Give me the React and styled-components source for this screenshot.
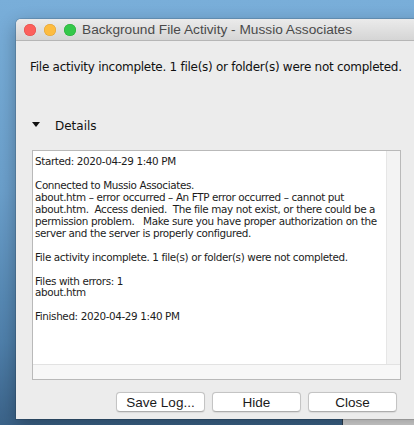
import React from "react"
import styled, { createGlobalStyle } from "styled-components"

const GlobalStyle = createGlobalStyle`
  html, body {
    margin: 0;
    padding: 0;
  }
  body {
    font-family: "DejaVu Sans", "Liberation Sans", sans-serif;
  }
`;

const Desktop = styled.div`
  position: relative;
  width: 414px;
  height: 425px;
  overflow: hidden;
  background: linear-gradient(180deg, #79aed9 0%, #6b9fcb 45%, #4f80ab 80%, #3b6389 100%);
  padding: 19px 0 0 16px;
  box-sizing: border-box;
`;

const BackWindow = styled.div`
  position: absolute;
  left: 342px;
  top: 412px;
  width: 90px;
  height: 30px;
  background: #dcdcdc;
  border-left: 1px solid #2c3e50;
`;

const Window = styled.div`
  position: relative;
  width: 420px;
  height: 400px;
  background: #ececec;
  border-radius: 5px 0 0 0;
  box-shadow: 0 0 0 1px rgba(0, 0, 0, 0.12), 0 6px 18px rgba(0, 0, 0, 0.3);
  display: flex;
  flex-direction: column;
  overflow: hidden;
`;

const TitleBar = styled.div`
  height: 21px;
  flex: none;
  display: flex;
  align-items: center;
  padding-left: 8px;
  gap: 6px;
  background: linear-gradient(180deg, #ebebeb 0%, #d5d5d5 100%);
  border-bottom: 1px solid #b6b6b6;
`;

const Light = styled.span`
  width: 12px;
  height: 12px;
  border-radius: 50%;
  background: ${p => p.$color};
  box-shadow: inset 0 0 0 0.5px ${p => p.$edge};
  flex: none;
`;

const Lights = styled.div`
  display: flex;
  gap: 8px;
`;

const Title = styled.div`
  font-family: "Liberation Sans", Arial, sans-serif;
  font-size: 13.7px;
  color: #4a4a4a;
  white-space: nowrap;
`;

const Body = styled.div`
  flex: 1;
  display: flex;
  flex-direction: column;
  padding: 0 0 0 14px;
`;

const Message = styled.div`
  font-size: 12px;
  letter-spacing: -0.27px;
  color: #111;
  margin-top: 19px;
  white-space: nowrap;
`;

const Disclosure = styled.div`
  display: flex;
  align-items: center;
  margin-top: 45px;
  padding-left: 2px;
  gap: 15px;
  font-size: 12px;
  color: #111;
`;

const Triangle = styled.span`
  width: 0;
  height: 0;
  border-left: 4px solid transparent;
  border-right: 4px solid transparent;
  border-top: 5px solid #111;
  margin-top: -3px;
`;

const LogBox = styled.div`
  margin: 17px 0 0 2px;
  width: 367px;
  height: 228px;
  border: 1px solid #b9b9b9;
  display: grid;
  grid-template-columns: 1fr 14px;
  grid-template-rows: 1fr 15px;
  background: #fafafa;
`;

const LogText = styled.pre`
  margin: 0;
  padding: 5px 0 0 2px;
  background: #fff;
  font-family: "DejaVu Sans", sans-serif;
  font-size: 10.4px;
  letter-spacing: -0.37px;
  line-height: 11.95px;
  color: #1c1c1c;
  white-space: pre;
  overflow: hidden;
`;

const VTrack = styled.div`
  background: #f3f3f3;
  border-left: 1px solid #e6e6e6;
`;

const HTrack = styled.div`
  grid-column: 1 / span 2;
  background: #f7f7f7;
  border-top: 1px solid #e2e2e2;
`;

const ButtonRow = styled.div`
  display: flex;
  gap: 7px;
  margin: 12px 0 0 86px;
`;

const Button = styled.button`
  width: 89px;
  height: 20px;
  padding: 0;
  border: 1px solid #c4c4c4;
  border-bottom-color: #adadad;
  border-radius: 4px;
  background: #fff;
  box-shadow: 0 0.5px 1px rgba(0, 0, 0, 0.08);
  font-family: "Liberation Sans", Arial, sans-serif;
  font-size: 13.5px;
  color: #1a1a1a;
`;

const Grip = styled.svg`
  position: absolute;
  right: 6px;
  bottom: 0;
`;

const log = `Started: 2020-04-29 1:40 PM

Connected to Mussio Associates.
about.htm – error occurred – An FTP error occurred – cannot put
about.htm.  Access denied.  The file may not exist, or there could be a
permission problem.   Make sure you have proper authorization on the
server and the server is properly configured.

File activity incomplete. 1 file(s) or folder(s) were not completed.

Files with errors: 1
about.htm

Finished: 2020-04-29 1:40 PM`;

export default function App() {
  return (
    <>
      <GlobalStyle />
      <Desktop>
        <BackWindow />
        <Window>
          <TitleBar>
            <Lights>
              <Light $color="#fc605c" $edge="#de4a45" />
              <Light $color="#fdbc40" $edge="#de9f34" />
              <Light $color="#34c84a" $edge="#27aa35" />
            </Lights>
            <Title>Background File Activity - Mussio Associates</Title>
          </TitleBar>
          <Body>
            <Message>File activity incomplete. 1 file(s) or folder(s) were not completed.</Message>
            <Disclosure>
              <Triangle />
              Details
            </Disclosure>
            <LogBox>
              <LogText>{log}</LogText>
              <VTrack />
              <HTrack />
            </LogBox>
            <ButtonRow>
              <Button>Save Log...</Button>
              <Button>Hide</Button>
              <Button>Close</Button>
            </ButtonRow>
          </Body>
          <Grip width="11" height="11" viewBox="0 0 11 11">
            <path d="M10 3 L3 10 M10 7 L7 10" stroke="#9a9a9a" strokeWidth="1" fill="none" />
          </Grip>
        </Window>
      </Desktop>
    </>
  )
}
